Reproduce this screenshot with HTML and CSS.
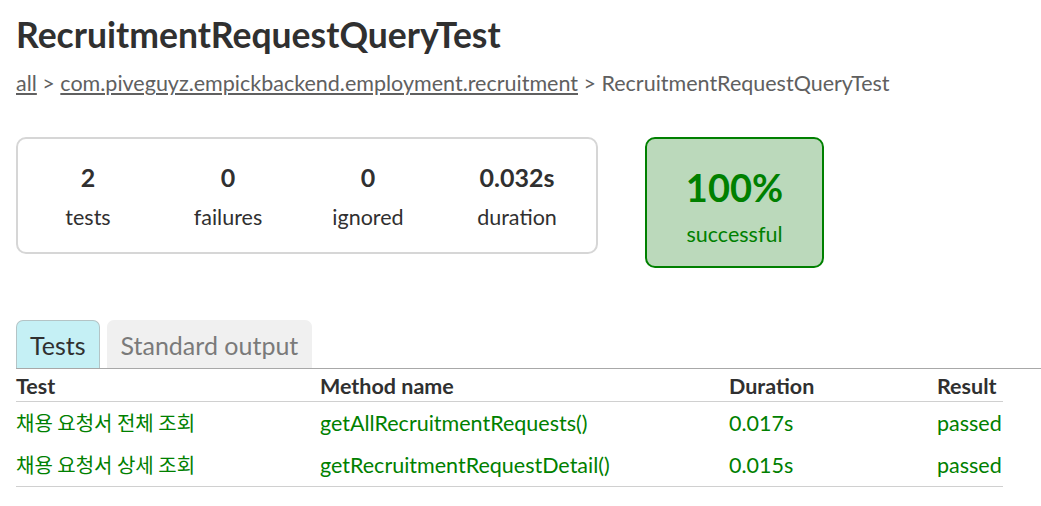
FILE: index.html
```html
<!DOCTYPE html>
<html lang="en">
<head>
<meta charset="utf-8">
<title>Test results - RecruitmentRequestQueryTest</title>
<link rel="stylesheet" href="styles.css">
</head>
<body>
<div class="content">
  <h1 class="title">RecruitmentRequestQueryTest</h1>
  <div class="breadcrumbs">
    <a href="#">all</a> &gt; <a href="#">com.piveguyz.empickbackend.employment.recruitment</a> &gt; RecruitmentRequestQueryTest
  </div>
  <div class="summary">
    <div class="summary-group">
      <div class="info-box">
        <div class="counter">2</div>
        <p>tests</p>
      </div>
      <div class="info-box">
        <div class="counter">0</div>
        <p>failures</p>
      </div>
      <div class="info-box">
        <div class="counter">0</div>
        <p>ignored</p>
      </div>
      <div class="info-box info-duration">
        <div class="counter">0.032s</div>
        <p>duration</p>
      </div>
    </div>
    <div class="success-rate">
      <div class="percent">100%</div>
      <p>successful</p>
    </div>
  </div>
  <div class="tabs">
    <ul class="tab-links">
      <li class="tab selected"><a href="#">Tests</a></li>
      <li class="tab"><a href="#">Standard output</a></li>
    </ul>
    <table class="results">
      <colgroup>
        <col class="c1"><col class="c2"><col class="c3"><col class="c4">
      </colgroup>
      <thead>
        <tr><th>Test</th><th>Method name</th><th>Duration</th><th>Result</th></tr>
      </thead>
      <tbody>
        <tr class="success">
          <td class="ko">채용 요청서 전체 조회</td>
          <td>getAllRecruitmentRequests()</td>
          <td>0.017s</td>
          <td>passed</td>
        </tr>
        <tr class="success">
          <td class="ko">채용 요청서 상세 조회</td>
          <td>getRecruitmentRequestDetail()</td>
          <td>0.015s</td>
          <td>passed</td>
        </tr>
      </tbody>
    </table>
  </div>
</div>
</body>
</html>
```

FILE: styles.css
```css
html, body {
  margin: 0;
  padding: 0;
  background: #ffffff;
}

body {
  font-family: Lato, "Noto Sans CJK KR", sans-serif;
  font-size: 21.5px;
  color: #303030;
}

a, a:visited {
  color: #505050;
}

.content {
  padding: 14px 0 0 16px;
}

.title {
  margin: 0;
  font-size: 35.5px;
  line-height: 42px;
  font-weight: bold;
  white-space: nowrap;
}

.breadcrumbs {
  margin-top: 14px;
  line-height: 26px;
  color: #606060;
  white-space: nowrap;
}

.breadcrumbs a {
  color: #606060;
}

.summary {
  margin-top: 41px;
  display: flex;
  align-items: flex-start;
}

.summary-group {
  display: flex;
  border: 2px solid #d6d6d6;
  border-radius: 10px;
}

.info-box {
  width: 140px;
  padding: 23px 0 22px;
  text-align: center;
}

.info-box p {
  margin: 0;
  line-height: 26px;
}

.info-duration {
  width: 158px;
}

.counter {
  font-size: 25px;
  font-weight: bold;
  line-height: 30px;
  margin-bottom: 12px;
}

.success-rate {
  width: 175px;
  margin-left: 47px;
  padding: 27px 0 19px;
  text-align: center;
  background: #bbd9bb;
  border: 2px solid #008000;
  border-radius: 10px;
  color: #008000;
}

.percent {
  font-size: 38px;
  font-weight: bold;
  line-height: 42px;
  margin-bottom: 13px;
}

.success-rate p {
  margin: 0;
  line-height: 26px;
}

.tabs {
  margin-top: 52px;
}

.tab-links {
  display: flex;
  gap: 7px;
  margin: 0;
  padding: 0;
  list-style: none;
  border-bottom: 1px solid #a8a8a8;
}

.tab {
  height: 47px;
  padding: 0 13px;
  border: 1px solid #f0f0f0;
  border-bottom: none;
  border-radius: 7px 7px 0 0;
  background: #f0f0f0;
  display: flex;
  align-items: center;
}

.tab a {
  font-size: 25px;
  text-decoration: none;
  color: #7a7a7a;
}

.tab.selected {
  background: #c5f0f5;
  border-color: #b4c4c6;
}

.tab.selected a {
  color: #303030;
}

.results {
  border-collapse: collapse;
  table-layout: fixed;
  width: 987px;
  border-bottom: 1px solid #d0d0d0;
}

.c1 { width: 304px; }
.c2 { width: 409px; }
.c3 { width: 208px; }
.c4 { width: 66px; }

.results th {
  text-align: left;
  white-space: nowrap;
  padding: 2px 0 0;
  line-height: 30px;
  font-weight: bold;
  border-bottom: 1px solid #d0d0d0;
}

.results td {
  white-space: nowrap;
  padding: 5px 0;
  line-height: 32px;
}

.success td {
  color: #008000;
}

.ko {
  font-family: "Noto Sans CJK KR", Lato, sans-serif;
  font-size: 20px;
}
```
